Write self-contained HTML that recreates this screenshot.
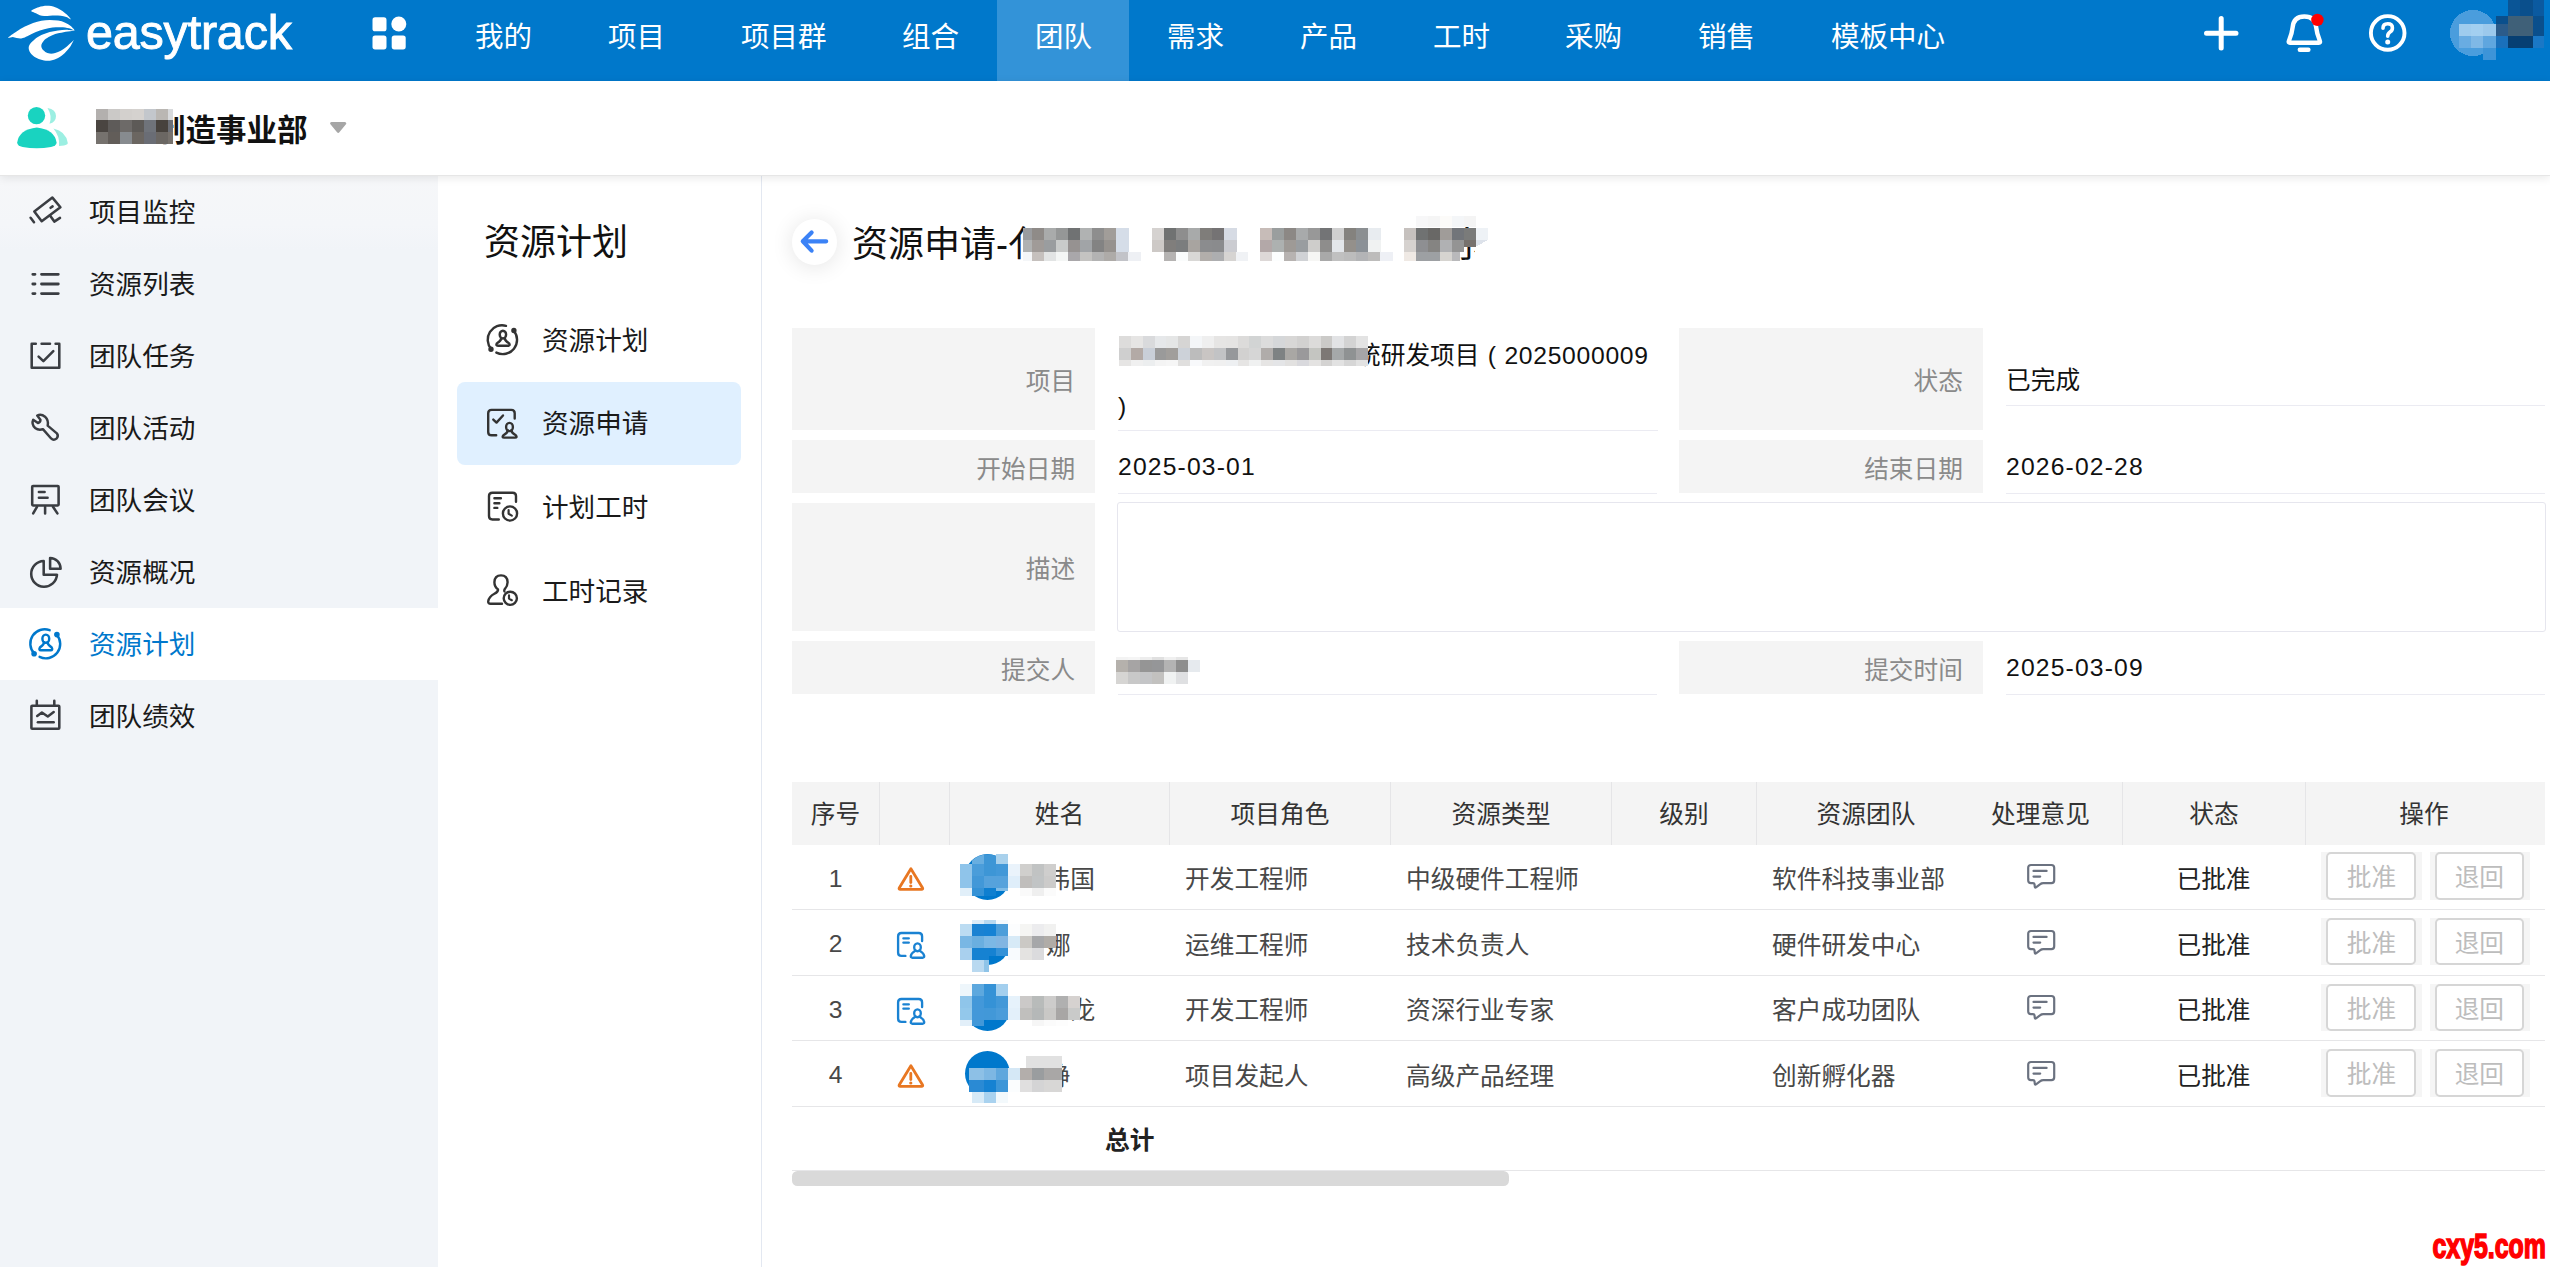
<!DOCTYPE html>
<html lang="zh-CN">
<head>
<meta charset="utf-8">
<title>资源申请 - easytrack</title>
<style>
*{box-sizing:border-box;margin:0;padding:0}
html,body{width:2550px;height:1267px;overflow:hidden;background:#fff}
body{font-family:"Liberation Sans","Noto Sans CJK SC",sans-serif;color:#1a1a1a;position:relative}
.abs{position:absolute}
svg{display:block;overflow:visible}
/* ---------- top nav ---------- */
#nav{position:absolute;left:0;top:0;width:2550px;height:80.8px;background:#0078cb}
#nav .tab{position:absolute;top:1.5px;height:79px;line-height:70px;font-size:28.5px;color:#fff;white-space:nowrap}
#nav .act{position:absolute;left:997px;top:0;width:132px;height:80.8px;background:#3393d8}
#logo-t{position:absolute;left:86px;top:-1px;height:80px;line-height:66px;font-size:48.5px;color:#fff;letter-spacing:-.2px;font-weight:400;-webkit-text-stroke:.9px #fff}
/* ---------- sub header ---------- */
#sub{position:absolute;left:0;top:80.8px;width:2550px;height:95.2px;background:#fff;border-bottom:1.4px solid #e6e6e6;box-shadow:0 2px 9px rgba(0,0,0,.09);z-index:3}
#sub .name{position:absolute;left:155px;top:0;height:95px;line-height:98.5px;font-size:30.5px;font-weight:700;color:#111;white-space:nowrap}
/* ---------- left sidebar ---------- */
#side{position:absolute;left:0;top:175px;width:438px;height:1092px;background:linear-gradient(#f6f7f9 0,#f4f6f9 50px,#f1f4f8 75px)}
#side .it{position:absolute;left:0;width:438px;height:72px}
#side .it.on{background:#fff}
#side .it span{position:absolute;left:89px;top:1px;line-height:72px;font-size:26.6px;color:#1a1a1a;white-space:nowrap}
#side .it.on span{color:#0078cc}
#side .it svg{position:absolute;left:27px;top:18px}
/* ---------- secondary sidebar ---------- */
#sec{position:absolute;left:438px;top:175px;width:323.8px;height:1092px;background:#fff;border-right:1.8px solid #e3e8f1;z-index:2}
#sec h2{position:absolute;left:46px;top:40px;font-size:36px;line-height:56px;font-weight:400;color:#111;white-space:nowrap}
#sec .it{position:absolute;left:19px;width:284px;height:83px;border-radius:8px}
#sec .it.on{background:#e0f0ff}
#sec .it span{position:absolute;left:85px;top:1.4px;line-height:83px;font-size:26.6px;color:#1a1a1a;white-space:nowrap}
#sec .it svg{position:absolute;left:27px;top:24px}
/* ---------- main ---------- */
#main{position:absolute;left:761px;top:175px;width:1789px;height:1092px;background:#fff}
#back{position:absolute;left:30.8px;top:44.2px;width:45.6px;height:45.6px;border-radius:50%;background:#fff;box-shadow:0 2px 22px rgba(0,0,0,.11)}
#title{position:absolute;left:91px;top:41.5px;font-size:36px;line-height:56px;color:#111;white-space:nowrap}
.lab{position:absolute;background:#f4f4f4;color:#8a8a8a;font-size:24.7px;text-align:right;padding-right:20px;white-space:nowrap;display:flex;align-items:center;justify-content:flex-end}
.val{position:absolute;border-bottom:1.6px solid #ebebf2;font-size:24.7px;color:#111;display:flex;align-items:center;white-space:nowrap}
.num{letter-spacing:1.15px}.num2{letter-spacing:.7px}
/* ---------- table ---------- */
#tbl{position:absolute;left:31px;top:607px;width:1753px}
#tbl .hd{position:absolute;left:0;top:0;width:1753px;height:63px;background:#f4f4f4}
#tbl .hd div{position:absolute;top:0;height:63px;line-height:66px;text-align:center;font-size:24.7px;color:#333;border-left:1.5px solid #e5e5e7;white-space:nowrap}
#tbl .row{position:absolute;left:0;width:1753px;height:66px;border-bottom:1.6px solid #e6e6e8}
#tbl .row div.c{position:absolute;top:2.7px;height:64px;line-height:66px;font-size:24.7px;color:#484848;white-space:nowrap}
.btn{position:absolute;top:7.8px;width:90px;height:47.4px;border:2px solid #d6d6d6;border-radius:5px;background:#fff;color:#bdbdbd;font-size:24.7px;line-height:48.5px;text-align:center}
.bb{position:absolute;top:7.8px;width:100.5px;height:47.4px;background:#f5f5f5}
.av{position:absolute;width:45.6px;height:45.6px;border-radius:50%;background:#0078cc}
.mz{position:absolute}
</style>
</head>
<body>
<!-- NAV -->
<div id="nav">
  <div class="act"></div>
  <div id="logo-t">easytrack</div>
  <div class="tab" style="left:475px">我的</div>
  <div class="tab" style="left:608px">项目</div>
  <div class="tab" style="left:741px">项目群</div>
  <div class="tab" style="left:902px">组合</div>
  <div class="tab" style="left:1035px">团队</div>
  <div class="tab" style="left:1167px">需求</div>
  <div class="tab" style="left:1300px">产品</div>
  <div class="tab" style="left:1433px">工时</div>
  <div class="tab" style="left:1565px">采购</div>
  <div class="tab" style="left:1698px">销售</div>
  <div class="tab" style="left:1831px">模板中心</div>
</div>
<!-- SUB -->
<div id="sub">
  <div class="name">制造事业部</div>
</div>
<!-- SIDE -->
<div id="side">
  <div class="it" style="top:1px"><span>项目监控</span></div>
  <div class="it" style="top:73px"><span>资源列表</span></div>
  <div class="it" style="top:145px"><span>团队任务</span></div>
  <div class="it" style="top:217px"><span>团队活动</span></div>
  <div class="it" style="top:289px"><span>团队会议</span></div>
  <div class="it" style="top:361px"><span>资源概况</span></div>
  <div class="it on" style="top:433px"><span>资源计划</span></div>
  <div class="it" style="top:505px"><span>团队绩效</span></div>
</div>
<!-- SEC -->
<div id="sec">
  <h2>资源计划</h2>
  <div class="it" style="top:124px"><span>资源计划</span></div>
  <div class="it on" style="top:207px"><span>资源申请</span></div>
  <div class="it" style="top:291px"><span>计划工时</span></div>
  <div class="it" style="top:375px"><span>工时记录</span></div>
</div>
<!-- MAIN -->
<div id="main">
  <div id="back"></div>
  <div id="title">资源申请-亻<span style="position:absolute;left:596px;top:0;width:27px;height:56px;overflow:hidden">序</span></div>

  <div class="lab" style="left:30.5px;top:153px;width:303.6px;height:102.4px">项目</div>
  <div class="val" style="left:357px;top:153px;width:540px;height:103px;display:block;line-height:51px;padding-top:1.5px"><span style="padding-left:238px;word-spacing:1.5px">统研发项目 ( <span class="num2">2025000009</span></span><br>)</div>
  <div class="lab" style="left:918.3px;top:153px;width:303.6px;height:102.4px">状态</div>
  <div class="val" style="left:1245px;top:153px;width:539px;height:78px;padding-top:23px">已完成</div>

  <div class="lab" style="left:30.5px;top:265px;width:303.6px;height:53.4px">开始日期</div>
  <div class="val num" style="left:357px;top:265px;width:539px;height:54px">2025-03-01</div>
  <div class="lab" style="left:918.3px;top:265px;width:303.6px;height:53.4px">结束日期</div>
  <div class="val num" style="left:1245px;top:265px;width:539px;height:54px">2026-02-28</div>

  <div class="lab" style="left:30.5px;top:328px;width:303.6px;height:128.4px">描述</div>
  <div class="abs" style="left:356px;top:327px;width:1429px;height:130px;border:1.6px solid #e6e6ee;border-radius:3px"></div>

  <div class="lab" style="left:30.5px;top:466px;width:303.6px;height:53.4px">提交人</div>
  <div class="val" style="left:357px;top:466px;width:539px;height:54px"></div>
  <div class="lab" style="left:918.3px;top:466px;width:303.6px;height:53.4px">提交时间</div>
  <div class="val num" style="left:1245px;top:466px;width:539px;height:54px">2025-03-09</div>

  <div id="tbl">
    <div class="hd">
      <div style="left:0;width:87px;border-left:0">序号</div>
      <div style="left:87px;width:70px"></div>
      <div style="left:157px;width:220px">姓名</div>
      <div style="left:377px;width:221px">项目角色</div>
      <div style="left:598px;width:221px">资源类型</div>
      <div style="left:819px;width:145px">级别</div>
      <div style="left:964px;width:219px">资源团队</div>
      <div style="left:1175px;width:147px;border-left:0">处理意见</div>
      <div style="left:1330px;width:183px">状态</div>
      <div style="left:1513px;width:237px">操作</div>
    </div>
<!--ROWS-->
    <div class="row" style="top:62.60px;height:65.6px">
      <div class="c" style="left:0;width:87px;text-align:center;top:1px">1</div>
      <svg style="position:absolute;left:106.1px;top:22.7px" width="30" height="30" viewBox="0 0 30 30"><use href="#i-warn"/></svg>
      <div class="av" style="left:172.8px;top:9.5px"></div>
      <div class="c" style="left:253.6px">伟国</div>
      <div class="c" style="left:393px">开发工程师</div>
      <div class="c" style="left:614px">中级硬件工程师</div>
      <div class="c" style="left:980px">软件科技事业部</div>
      <svg style="position:absolute;left:1236.1px;top:20.5px" width="30" height="30" viewBox="0 0 30 30"><use href="#i-msg"/></svg>
      <div class="c" style="left:1330px;width:183px;text-align:center;color:#222">已批准</div>
      <div class="bb" style="left:1529px"></div><div class="btn" style="left:1534.4px">批准</div>
      <div class="bb" style="left:1637.6px;width:100.3px"></div><div class="btn" style="left:1642.7px;width:89.3px">退回</div>
    </div>
    <div class="row" style="top:128.20px;height:65.6px">
      <div class="c" style="left:0;width:87px;text-align:center;top:1px">2</div>
      <svg style="position:absolute;left:106.0px;top:22.0px" width="30" height="30" viewBox="0 0 30 30"><use href="#i-card"/></svg>
      <div class="av" style="left:172.8px;top:9.5px"></div>
      <div class="c" style="left:254px">娜</div>
      <div class="c" style="left:393px">运维工程师</div>
      <div class="c" style="left:614px">技术负责人</div>
      <div class="c" style="left:980px">硬件研发中心</div>
      <svg style="position:absolute;left:1236.1px;top:20.5px" width="30" height="30" viewBox="0 0 30 30"><use href="#i-msg"/></svg>
      <div class="c" style="left:1330px;width:183px;text-align:center;color:#222">已批准</div>
      <div class="bb" style="left:1529px"></div><div class="btn" style="left:1534.4px">批准</div>
      <div class="bb" style="left:1637.6px;width:100.3px"></div><div class="btn" style="left:1642.7px;width:89.3px">退回</div>
    </div>
    <div class="row" style="top:193.80px;height:65.6px">
      <div class="c" style="left:0;width:87px;text-align:center;top:1px">3</div>
      <svg style="position:absolute;left:106.0px;top:22.0px" width="30" height="30" viewBox="0 0 30 30"><use href="#i-card"/></svg>
      <div class="av" style="left:172.8px;top:9.5px"></div>
      <div class="c" style="left:278.5px">龙</div>
      <div class="c" style="left:393px">开发工程师</div>
      <div class="c" style="left:614px">资深行业专家</div>
      <div class="c" style="left:980px">客户成功团队</div>
      <svg style="position:absolute;left:1236.1px;top:20.5px" width="30" height="30" viewBox="0 0 30 30"><use href="#i-msg"/></svg>
      <div class="c" style="left:1330px;width:183px;text-align:center;color:#222">已批准</div>
      <div class="bb" style="left:1529px"></div><div class="btn" style="left:1534.4px">批准</div>
      <div class="bb" style="left:1637.6px;width:100.3px"></div><div class="btn" style="left:1642.7px;width:89.3px">退回</div>
    </div>
    <div class="row" style="top:259.40px;height:65.6px">
      <div class="c" style="left:0;width:87px;text-align:center;top:1px">4</div>
      <svg style="position:absolute;left:106.1px;top:22.7px" width="30" height="30" viewBox="0 0 30 30"><use href="#i-warn"/></svg>
      <div class="av" style="left:172.8px;top:9.5px"></div>
      <div class="c" style="left:253.5px">静</div>
      <div class="c" style="left:393px">项目发起人</div>
      <div class="c" style="left:614px">高级产品经理</div>
      <div class="c" style="left:980px">创新孵化器</div>
      <svg style="position:absolute;left:1236.1px;top:20.5px" width="30" height="30" viewBox="0 0 30 30"><use href="#i-msg"/></svg>
      <div class="c" style="left:1330px;width:183px;text-align:center;color:#222">已批准</div>
      <div class="bb" style="left:1529px"></div><div class="btn" style="left:1534.4px">批准</div>
      <div class="bb" style="left:1637.6px;width:100.3px"></div><div class="btn" style="left:1642.7px;width:89.3px">退回</div>
    </div>
    <div class="row" style="top:325.00px;height:63.6px">
      <div class="c" style="left:0;width:362.5px;text-align:right;font-weight:700;color:#222;top:1.4px">总计</div>
    </div>
    <div class="abs" style="left:0;top:389.4px;width:717px;height:14.6px;border-radius:5.5px;background:#d9d9d9"></div>
<!--/ROWS-->
  </div>
</div>
<svg id="icons" class="abs" style="left:0;top:0;z-index:10;pointer-events:none" width="2550" height="1267" viewBox="0 0 2550 1267" fill="none" stroke-linecap="round" stroke-linejoin="round">
  <defs>
    <g id="i-warn" fill="none" stroke-linecap="round" stroke-linejoin="round" stroke="#e87722" stroke-width="2.8"><path d="M12.9 1.7 L1.2 21 Q0.6 22.4 2.2 22.4 L23.6 22.4 Q25.2 22.4 24.6 21 Z"/><path d="M12.8 9.4 V15.6"/><circle cx="12.8" cy="19" r="0.9" fill="#e87722" stroke-width="1.4"/></g>
    <g id="i-card" fill="none" stroke-linecap="round" stroke-linejoin="round" stroke="#1a82d2" stroke-width="2.35"><path d="M24.1 9 V4.4 Q24.1 1 20.7 1 H3.5 Q0.1 1 0.1 4.4 V20.5 Q0.1 23.9 3.5 23.9 H7.4"/><path d="M5.4 6.3 H10.8 M5.4 10.6 H10.8"/><ellipse cx="19.5" cy="15.3" rx="3.3" ry="3.9"/><path d="M17.6 18.6 Q13.4 21 12.8 24 Q12.7 25.7 14.4 25.7 H24.6 Q26.3 25.7 26.2 24 Q25.6 21 21.4 18.6"/></g>
    <g id="i-msg" fill="none" stroke-linecap="round" stroke-linejoin="round" stroke="#6b7280" stroke-width="2.2"><path d="M3 0 H23.4 Q26.2 0 26.2 2.8 V15.3 Q26.2 18.1 23.4 18.1 H15.4 Q13.4 18.1 12.3 19.1 L8 22.4 Q7 23 6.8 21.8 L6.5 19.2 Q6.3 18.1 5 18.1 H3 Q0.2 18.1 0.2 15.3 V2.8 Q0.2 0 3 0 Z"/><path d="M5.5 5.9 H18.6 M5.5 11.6 H12.2"/></g>
  </defs>
  <!-- logo swoosh -->
  <g fill="#fff" stroke="none">
    <path d="M31.2 10.8 C31.7 9.8 36.0 8.0 38.7 7.2 C41.3 6.4 44.2 5.8 47.0 5.8 C49.7 5.8 52.7 6.3 55.2 7.2 C57.8 8.1 60.3 9.6 62.4 11.0 C64.5 12.5 66.6 14.3 68.0 15.7 C69.4 17.1 71.1 19.2 70.8 19.4 C70.6 19.7 68.0 17.7 66.3 17.1 C64.6 16.5 62.6 16.0 60.8 15.7 C58.9 15.5 57.1 15.4 55.2 15.4 C53.4 15.4 51.6 15.6 49.7 15.7 C47.9 15.9 45.9 16.2 44.2 16.1 C42.5 16.0 41.2 15.7 39.8 15.2 C38.4 14.7 37.3 14.0 35.9 13.3 C34.5 12.5 30.8 11.8 31.2 10.8 Z"/>
    <path d="M8.3 37.6 C8.9 36.6 13.8 33.3 16.6 31.5 C19.3 29.7 22.1 27.9 24.9 26.5 C27.6 25.1 30.4 23.9 33.1 22.9 C35.9 22.0 38.7 21.2 41.4 20.7 C44.2 20.2 47.0 19.9 49.7 19.9 C52.5 19.9 55.4 20.1 58.0 20.6 C60.6 21.0 63.1 21.7 65.2 22.7 C67.3 23.6 69.2 24.7 70.7 26.0 C72.3 27.3 74.8 30.1 74.5 30.5 C74.2 30.9 71.3 28.8 69.1 28.3 C66.8 27.7 63.5 27.3 60.8 27.2 C58.0 27.1 55.2 27.3 52.5 27.6 C49.7 28.0 47.0 28.5 44.2 29.3 C41.4 30.0 38.5 31.0 35.9 32.0 C33.3 33.1 30.8 34.4 28.7 35.4 C26.7 36.3 25.1 37.3 23.8 37.8 C22.4 38.4 21.6 38.5 20.4 38.5 C19.2 38.5 17.9 38.2 16.6 38.0 C15.3 37.7 14.1 37.2 12.7 37.1 C11.3 37.1 7.6 38.5 8.3 37.6 Z"/>
    <path d="M74.3 30.7 C73.4 30.5 69.0 29.9 66.3 29.8 C63.6 29.8 60.8 30.0 58.0 30.4 C55.2 30.8 52.5 31.3 49.7 32.0 C47.0 32.8 43.9 33.9 41.4 35.1 C39.0 36.3 36.6 37.8 34.8 39.2 C33.0 40.7 31.4 42.3 30.4 43.6 C29.4 45.0 28.8 46.1 28.7 47.5 C28.6 48.9 29.1 50.6 29.8 51.9 C30.6 53.3 31.7 54.6 33.1 55.8 C34.6 57.0 36.6 58.3 38.7 59.1 C40.8 59.9 43.5 60.6 45.9 60.8 C48.3 60.9 50.7 60.6 53.0 59.9 C55.3 59.3 57.6 58.2 59.7 56.9 C61.8 55.6 63.9 53.8 65.7 51.9 C67.6 50.1 69.4 47.9 70.7 45.9 C72.1 43.8 73.7 40.1 73.9 39.5 C74.1 38.9 73.1 40.9 71.8 42.1 C70.6 43.3 68.1 45.5 66.3 47.0 C64.5 48.4 62.6 49.8 60.8 50.8 C58.9 51.8 57.1 52.6 55.2 53.0 C53.4 53.5 51.4 53.8 49.7 53.6 C48.1 53.4 46.6 52.8 45.3 51.9 C44.0 51.1 42.6 49.8 42.0 48.6 C41.3 47.4 41.2 46.0 41.4 44.8 C41.7 43.5 42.4 42.2 43.6 40.9 C44.8 39.6 46.7 38.3 48.6 37.1 C50.6 36.0 52.8 34.9 55.2 34.1 C57.7 33.3 60.8 32.7 63.5 32.2 C66.3 31.6 70.0 31.3 71.8 31.0 C73.6 30.8 75.2 30.9 74.3 30.7 Z"/>
  </g>
  <!-- app grid -->
  <g fill="#fff" stroke="none">
    <rect x="372.5" y="17.3" width="14" height="14" rx="2.6"/>
    <circle cx="398.8" cy="24" r="7.5"/>
    <rect x="372.5" y="35.4" width="14" height="14" rx="2.6"/>
    <rect x="391.7" y="35.4" width="14" height="14" rx="2.6"/>
  </g>
  <!-- plus -->
  <path d="M2206.5 33.2 H2236 M2221.2 18.5 V48" stroke="#fff" stroke-width="5"/>
  <!-- bell -->
  <g stroke="#fff" stroke-width="4.4">
    <path d="M2288.9 41 Q2292 33.5 2292.6 27.5 Q2293.6 16.5 2304.4 16.5 Q2315.2 16.5 2316.2 27.5 Q2316.8 33.5 2319.9 41 Q2320.6 42.7 2318.8 42.7 H2290 Q2288.2 42.7 2288.9 41 Z"/>
    <path d="M2299.8 49.7 H2308.4"/>
  </g>
  <circle cx="2317.4" cy="19.9" r="6.2" fill="#ff0000"/>
  <!-- help -->
  <circle cx="2387.7" cy="32.9" r="16.8" stroke="#fff" stroke-width="3.9"/>
  <path d="M2383 28.3 Q2383 23.8 2387.7 23.8 Q2392.4 23.8 2392.4 27.9 Q2392.4 30.4 2390 32 Q2387.7 33.6 2387.7 36.2" stroke="#fff" stroke-width="3.6"/>
  <circle cx="2387.7" cy="42.1" r="2.5" fill="#fff"/>
  <!-- team icon -->
  <g stroke="none">
    <path d="M47.5 108 Q56 109.5 56 116 Q56 122 49.5 123.8 Q52.5 116 47.5 108 Z" fill="#9cefe2"/>
    <path d="M53.4 128.4 Q66 131 67.8 143 Q67.6 145 64 145.4 L59 146 Q60 136 53.4 128.4 Z" fill="#9cefe2"/>
    <circle cx="36.5" cy="115.6" r="8.7" fill="#19d3c0"/>
    <path d="M17.2 142.6 Q19 129.6 36.8 127.6 Q54.6 129.6 56.6 142.6 Q56.6 146 51 147 Q36.8 149.4 22.6 147 Q17.2 146 17.2 142.6 Z" fill="#19d3c0"/>
  </g>
  <!-- caret -->
  <path d="M331.6 123.4 H344.8 L338.2 131.4 Z" fill="#a6a6a6" stroke="#a6a6a6" stroke-width="3"/>

  <!-- ===== left sidebar icons ===== -->
  <g stroke="#3a3d42" stroke-width="2.55">
    <!-- monitor cam -->
    <path d="M52.4 197.6 L60.4 207.3 L41.7 221.2 L34.3 211.5 Z"/>
    <path d="M50.6 207.8 L52.6 206.4"/>
    <path d="M50 215.4 L54.3 221.6 L60 217.9"/>
    <path d="M30.6 217.8 L34 222.2"/>
    <!-- list -->
    <path d="M32.8 274.3 H35 M41.5 274.3 H58.3 M32.8 284 H35 M41.5 284 H58.3 M32.8 293.6 H35 M41.5 293.6 H58.3" stroke-width="2.8"/>
    <!-- task -->
    <path d="M35.8 343.8 H31.7 V367.8 H59.3 V343.8 H55.6 M41.6 343.8 H50"/>
    <path d="M38.6 356.6 L43.4 361.2 L53.3 351.2"/>
    <!-- wrench -->
    <g transform="translate(45.3 427.5) scale(.955) translate(-45.3 -427.5)"><path d="M32.6 419.4 Q30.6 424 34.6 428 Q38.4 430.8 42.8 429.2 L51.4 439 Q54 441.6 57 439.2 Q59.6 436.6 57.4 433.6 L47.8 425.6 Q49 420 45 416.2 Q41 413 36.8 415 L40.2 419.4 Q40.4 422 37.6 422.8 Z"/></g>
    <!-- meeting -->
    <rect x="32.2" y="485.9" width="26.4" height="19.5" rx="0.8"/>
    <path d="M38.9 491.9 H44.6 M38.9 497.7 H47.6"/>
    <path d="M37 506.8 L33.2 513.4 M45.1 506.8 V513.4 M53 506.8 L57.4 513.4"/>
    <!-- pie -->
    <path d="M43.7 561 A12.9 12.9 0 1 0 57 574.7 H43.7 Z"/>
    <path d="M50.1 568.7 V557.9 A10.8 10.8 0 0 1 60.6 568.7 Z"/>
    <!-- perf -->
    <rect x="31.4" y="705.8" width="27.9" height="22.9" rx="0.8"/>
    <path d="M36.8 700.8 V705.8 M54.3 700.8 V705.8"/>
    <path d="M37.2 716 L41.9 712.5 L47.8 716.5 L53.7 712.1"/>
    <path d="M37.9 722.3 H53.7"/>
  </g>
  <!-- resource plan (active blue) -->
  <g stroke="#0078cc" stroke-width="2.45">
    <path d="M49.6 630.2 A14.3 14.3 0 0 0 34.2 653.4"/>
    <path d="M56.8 634.8 A14.3 14.3 0 0 1 39.6 656.9"/>
    <circle cx="56.9" cy="634.6" r="1.6" fill="#0078cc"/>
    <circle cx="34.1" cy="653.7" r="1.6" fill="#0078cc"/>
    <ellipse cx="45.8" cy="638.7" rx="3.4" ry="4.1"/>
    <path d="M44.2 642.2 Q43.8 645.2 40 647.4 Q38.4 650.2 41 650.2 H50.6 Q53.2 650.2 51.6 647.4 Q47.8 645.2 47.4 642.2"/>
  </g>

  <!-- ===== secondary sidebar icons ===== -->
  <g stroke="#333" stroke-width="2.4">
    <!-- resource plan -->
    <path d="M506 325.8 A14.3 14.3 0 0 0 491.2 348.9"/>
    <path d="M513.8 330.7 A14.3 14.3 0 0 1 496.4 352.6"/>
    <circle cx="513.9" cy="330.5" r="1.5" fill="#333"/>
    <circle cx="491" cy="349.2" r="1.5" fill="#333"/>
    <ellipse cx="502.9" cy="334.6" rx="3.2" ry="3.9"/>
    <path d="M501.4 338 Q501 341 497 343.2 Q495.4 345.8 498 345.8 H508 Q510.6 345.8 509 343.2 Q505 341 504.6 338"/>
    <!-- resource apply -->
    <path d="M514.7 418.6 V413.3 Q514.7 409.9 511.3 409.9 H491.6 Q488.2 409.9 488.2 413.3 V431.9 Q488.2 435.3 491.6 435.3 H496.2"/>
    <path d="M493.3 419.6 L496.5 422.6 L503 415.5"/>
    <ellipse cx="509.5" cy="427" rx="3.4" ry="4.1"/>
    <path d="M507.9 430.5 Q507.4 433.2 503.4 435.2 Q501.6 437.6 504.2 437.6 H515 Q517.6 437.6 515.8 435.2 Q511.8 433.2 511.3 430.5"/>
    <!-- plan hours -->
    <path d="M516 501.8 V496.1 Q516 492.7 512.6 492.7 H492.4 Q489 492.7 489 496.1 V516.1 Q489 519.5 492.4 519.5 H498.8"/>
    <path d="M494.4 498.2 H500.9 M494.4 503.2 H499.4 M494.4 507.9 H497.3"/>
    <circle cx="510" cy="513.5" r="7.1"/>
    <path d="M508.6 510.2 V513.8 L511.8 515.6" stroke-width="2.2"/>
    <!-- hours record -->
    <path d="M502 603.8 H490.6 Q488 603.8 488.2 601.4 Q489 596.6 494.4 593.8 Q498.4 591.8 498 589.4 Q494.4 586.6 494.4 582.2 Q494.6 575.4 501 575.4 Q507.4 575.4 507.6 582.2 Q507.6 586 504.6 589.4 Q504 590.4 504.4 591.4"/>
    <circle cx="510.3" cy="598.3" r="6.6"/>
    <path d="M509 595.4 V598.6 L511.8 600.2" stroke-width="2.2"/>
  </g>

  <!-- back arrow -->
  <path d="M802.8 241.3 H826.2 M811.6 232.6 L802.8 241.3 L811.6 250.6" stroke="#3b82f6" stroke-width="4.2"/>
<!--MOSAIC-->
  <g id="mosaic" stroke="none" shape-rendering="crispEdges">
  <rect x="96.1" y="108.8" width="12.2" height="11.5" fill="#b3b0ae"/>
  <rect x="108.0" y="108.8" width="12.3" height="11.5" fill="#cbc9c7"/>
  <rect x="120.0" y="108.8" width="12.2" height="11.5" fill="#d3d0cd"/>
  <rect x="131.9" y="108.8" width="12.5" height="11.5" fill="#d5d2cf"/>
  <rect x="144.1" y="108.8" width="12.4" height="11.5" fill="#c3c7cc"/>
  <rect x="156.2" y="108.8" width="12.5" height="11.5" fill="#bab7b3"/>
  <rect x="168.4" y="108.8" width="4.8" height="11.5" fill="#d8dadc"/>
  <rect x="96.1" y="120.0" width="12.2" height="12.3" fill="#4a4541"/>
  <rect x="108.0" y="120.0" width="12.3" height="12.3" fill="#5e5b59"/>
  <rect x="120.0" y="120.0" width="12.2" height="12.3" fill="#6d6a68"/>
  <rect x="131.9" y="120.0" width="12.5" height="12.3" fill="#5d5a57"/>
  <rect x="144.1" y="120.0" width="12.4" height="12.3" fill="#6f737a"/>
  <rect x="156.2" y="120.0" width="12.5" height="12.3" fill="#47423d"/>
  <rect x="168.4" y="120.0" width="4.8" height="12.3" fill="#6b6e75"/>
  <rect x="96.1" y="132.0" width="12.2" height="12.2" fill="#76726e"/>
  <rect x="108.0" y="132.0" width="12.3" height="12.2" fill="#625d59"/>
  <rect x="120.0" y="132.0" width="12.2" height="12.2" fill="#878b8f"/>
  <rect x="131.9" y="132.0" width="12.5" height="12.2" fill="#6b6661"/>
  <rect x="144.1" y="132.0" width="12.4" height="12.2" fill="#6a6d75"/>
  <rect x="156.2" y="132.0" width="12.5" height="12.2" fill="#6b6763"/>
  <rect x="168.4" y="132.0" width="4.8" height="12.2" fill="#77726d"/>
  <rect x="1023.1" y="228.1" width="9.6" height="12.1" fill="#9a9c9f"/>
  <rect x="1032.4" y="228.1" width="12.0" height="12.1" fill="#8f8b88"/>
  <rect x="1044.1" y="228.1" width="12.5" height="12.1" fill="#a9abab"/>
  <rect x="1056.3" y="228.1" width="12.2" height="12.1" fill="#959797"/>
  <rect x="1068.2" y="228.1" width="12.5" height="12.1" fill="#707273"/>
  <rect x="1080.4" y="228.1" width="12.1" height="12.1" fill="#b0b2b2"/>
  <rect x="1092.2" y="228.1" width="12.0" height="12.1" fill="#8e8e8e"/>
  <rect x="1103.9" y="228.1" width="12.5" height="12.1" fill="#a19d99"/>
  <rect x="1116.1" y="228.1" width="12.6" height="12.1" fill="#d5dde8"/>
  <rect x="1023.1" y="239.9" width="9.6" height="12.4" fill="#b0b2b2"/>
  <rect x="1032.4" y="239.9" width="12.0" height="12.4" fill="#a09b98"/>
  <rect x="1044.1" y="239.9" width="12.5" height="12.4" fill="#9a9d9f"/>
  <rect x="1056.3" y="239.9" width="12.2" height="12.4" fill="#c9cbca"/>
  <rect x="1068.2" y="239.9" width="12.5" height="12.4" fill="#969291"/>
  <rect x="1080.4" y="239.9" width="12.1" height="12.4" fill="#a1a4a7"/>
  <rect x="1092.2" y="239.9" width="12.0" height="12.4" fill="#838383"/>
  <rect x="1103.9" y="239.9" width="12.5" height="12.4" fill="#96928e"/>
  <rect x="1116.1" y="239.9" width="12.6" height="12.4" fill="#d5dde8"/>
  <rect x="1023.1" y="252.0" width="9.6" height="9.2" fill="#f4f6f8"/>
  <rect x="1032.4" y="252.0" width="12.0" height="9.2" fill="#c5c0bd"/>
  <rect x="1044.1" y="252.0" width="12.5" height="9.2" fill="#e2e4e4"/>
  <rect x="1056.3" y="252.0" width="12.2" height="9.2" fill="#f4f6f5"/>
  <rect x="1068.2" y="252.0" width="12.5" height="9.2" fill="#a9a7aa"/>
  <rect x="1080.4" y="252.0" width="12.1" height="9.2" fill="#c4c3c1"/>
  <rect x="1092.2" y="252.0" width="12.0" height="9.2" fill="#b3b3b3"/>
  <rect x="1103.9" y="252.0" width="12.5" height="9.2" fill="#aeaba8"/>
  <rect x="1116.1" y="252.0" width="12.6" height="9.2" fill="#c2c3c8"/>
  <rect x="1128.4" y="252.0" width="12.1" height="9.2" fill="#eef0f4"/>
  <rect x="1152.0" y="228.1" width="12.6" height="12.1" fill="#d5d2d0"/>
  <rect x="1164.3" y="228.1" width="12.1" height="12.1" fill="#707272"/>
  <rect x="1176.1" y="228.1" width="12.0" height="12.1" fill="#8e8e8e"/>
  <rect x="1187.8" y="228.1" width="12.5" height="12.1" fill="#a8aaaa"/>
  <rect x="1200.0" y="228.1" width="12.5" height="12.1" fill="#7f7d7a"/>
  <rect x="1212.2" y="228.1" width="12.2" height="12.1" fill="#757374"/>
  <rect x="1224.1" y="228.1" width="12.5" height="12.1" fill="#d6dbe4"/>
  <rect x="1152.0" y="239.9" width="12.6" height="12.4" fill="#cdc9c6"/>
  <rect x="1164.3" y="239.9" width="12.1" height="12.4" fill="#807e7c"/>
  <rect x="1176.1" y="239.9" width="12.0" height="12.4" fill="#7b7d7e"/>
  <rect x="1187.8" y="239.9" width="12.5" height="12.4" fill="#a8a4a0"/>
  <rect x="1200.0" y="239.9" width="12.5" height="12.4" fill="#8b8c8e"/>
  <rect x="1212.2" y="239.9" width="12.2" height="12.4" fill="#8a8b8d"/>
  <rect x="1224.1" y="239.9" width="12.5" height="12.4" fill="#cbccd1"/>
  <rect x="1164.3" y="252.0" width="12.1" height="9.2" fill="#b5b3b2"/>
  <rect x="1176.1" y="252.0" width="12.0" height="9.2" fill="#fafcfc"/>
  <rect x="1187.8" y="252.0" width="12.5" height="9.2" fill="#d9d8d6"/>
  <rect x="1200.0" y="252.0" width="12.5" height="9.2" fill="#b2aeab"/>
  <rect x="1212.2" y="252.0" width="12.2" height="9.2" fill="#adaeb0"/>
  <rect x="1224.1" y="252.0" width="12.5" height="9.2" fill="#d6d4d2"/>
  <rect x="1236.3" y="252.0" width="12.0" height="9.2" fill="#f0f2f5"/>
  <rect x="1259.8" y="228.1" width="12.5" height="12.1" fill="#c7bcb8"/>
  <rect x="1272.0" y="228.1" width="12.2" height="12.1" fill="#9a9e9e"/>
  <rect x="1283.9" y="228.1" width="12.5" height="12.1" fill="#8c8885"/>
  <rect x="1296.1" y="228.1" width="12.0" height="12.1" fill="#a8aaab"/>
  <rect x="1307.8" y="228.1" width="12.5" height="12.1" fill="#989898"/>
  <rect x="1320.0" y="228.1" width="12.3" height="12.1" fill="#737476"/>
  <rect x="1332.0" y="228.1" width="12.4" height="12.1" fill="#d0d0d0"/>
  <rect x="1344.1" y="228.1" width="12.1" height="12.1" fill="#84827e"/>
  <rect x="1355.9" y="228.1" width="12.4" height="12.1" fill="#8b8f92"/>
  <rect x="1368.0" y="228.1" width="12.7" height="12.1" fill="#e8ecf0"/>
  <rect x="1259.8" y="239.9" width="12.5" height="12.4" fill="#b3a8a8"/>
  <rect x="1272.0" y="239.9" width="12.2" height="12.4" fill="#adb1b0"/>
  <rect x="1283.9" y="239.9" width="12.5" height="12.4" fill="#9e9a96"/>
  <rect x="1296.1" y="239.9" width="12.0" height="12.4" fill="#999da0"/>
  <rect x="1307.8" y="239.9" width="12.5" height="12.4" fill="#cecdcb"/>
  <rect x="1320.0" y="239.9" width="12.3" height="12.4" fill="#8e8d8c"/>
  <rect x="1332.0" y="239.9" width="12.4" height="12.4" fill="#e3e6ea"/>
  <rect x="1344.1" y="239.9" width="12.1" height="12.4" fill="#94908b"/>
  <rect x="1355.9" y="239.9" width="12.4" height="12.4" fill="#8b9197"/>
  <rect x="1368.0" y="239.9" width="12.7" height="12.4" fill="#f0f2f2"/>
  <rect x="1259.8" y="252.0" width="12.5" height="9.2" fill="#ddd8d7"/>
  <rect x="1272.0" y="252.0" width="12.2" height="9.2" fill="#fcfefe"/>
  <rect x="1283.9" y="252.0" width="12.5" height="9.2" fill="#b7b3b1"/>
  <rect x="1296.1" y="252.0" width="12.0" height="9.2" fill="#d0d2d5"/>
  <rect x="1307.8" y="252.0" width="12.5" height="9.2" fill="#f6f6f4"/>
  <rect x="1320.0" y="252.0" width="12.3" height="9.2" fill="#a9a9a9"/>
  <rect x="1332.0" y="252.0" width="12.4" height="9.2" fill="#c0c0c0"/>
  <rect x="1344.1" y="252.0" width="12.1" height="9.2" fill="#bcbcbc"/>
  <rect x="1355.9" y="252.0" width="12.4" height="9.2" fill="#b3b4b6"/>
  <rect x="1368.0" y="252.0" width="12.7" height="9.2" fill="#bdbcbb"/>
  <rect x="1380.4" y="252.0" width="12.1" height="9.2" fill="#eef0f5"/>
  <rect x="1404.0" y="228.1" width="12.3" height="12.1" fill="#c6c1be"/>
  <rect x="1416.0" y="228.1" width="12.3" height="12.1" fill="#707272"/>
  <rect x="1428.0" y="228.1" width="12.2" height="12.1" fill="#696866"/>
  <rect x="1439.9" y="228.1" width="12.3" height="12.1" fill="#a09c99"/>
  <rect x="1451.9" y="228.1" width="12.4" height="12.1" fill="#72757a"/>
  <rect x="1464.0" y="228.1" width="12.2" height="12.1" fill="#7a7b7a"/>
  <rect x="1475.9" y="228.1" width="12.3" height="12.1" fill="#eef2f6"/>
  <rect x="1404.0" y="239.9" width="12.3" height="12.4" fill="#d6d2cf"/>
  <rect x="1416.0" y="239.9" width="12.3" height="12.4" fill="#8e8f92"/>
  <rect x="1428.0" y="239.9" width="12.2" height="12.4" fill="#858482"/>
  <rect x="1439.9" y="239.9" width="12.3" height="12.4" fill="#b0b1b3"/>
  <rect x="1404.0" y="252.0" width="12.3" height="9.2" fill="#efe9e4"/>
  <rect x="1416.0" y="252.0" width="12.3" height="9.2" fill="#9da0a3"/>
  <rect x="1428.0" y="252.0" width="12.2" height="9.2" fill="#9da0a3"/>
  <rect x="1439.9" y="252.0" width="12.3" height="9.2" fill="#d6d4d0"/>
  <rect x="1451.9" y="239.9" width="12.3" height="12.4" fill="#949494"/>
  <rect x="1464" y="239.9" width="12.1" height="6.6" fill="#77716d"/>
  <rect x="1451.9" y="252" width="8.2" height="8.9" fill="#b9b9bb"/>
  <path d="M1475.9 240 H1487.9 L1476 246.6 Z" fill="#dde2ea"/>
  <rect x="1416.0" y="216.1" width="12.3" height="11.2" fill="#f7f7f8"/>
  <rect x="1428.0" y="216.1" width="12.2" height="11.2" fill="#f5f5f5"/>
  <rect x="1439.9" y="216.1" width="12.3" height="11.2" fill="#fcfbf9"/>
  <rect x="1451.9" y="216.1" width="12.4" height="11.2" fill="#f4f6f8"/>
  <rect x="1464.0" y="216.1" width="12.2" height="11.2" fill="#f4f4f4"/>
  <rect x="1118.9" y="335.9" width="12.2" height="12.1" fill="#dddcdb"/>
  <rect x="1130.8" y="335.9" width="12.2" height="12.1" fill="#e6e5e4"/>
  <rect x="1142.6" y="335.9" width="12.2" height="12.1" fill="#d9dadc"/>
  <rect x="1154.5" y="335.9" width="12.2" height="12.1" fill="#e6e8ea"/>
  <rect x="1166.3" y="335.9" width="12.2" height="12.1" fill="#e5e6e6"/>
  <rect x="1178.2" y="335.9" width="12.2" height="12.1" fill="#d6d5d4"/>
  <rect x="1190.0" y="335.9" width="12.2" height="12.1" fill="#f4f6f8"/>
  <rect x="1201.9" y="335.9" width="12.2" height="12.1" fill="#efefef"/>
  <rect x="1213.8" y="335.9" width="12.2" height="12.1" fill="#e6e5e4"/>
  <rect x="1225.6" y="335.9" width="12.2" height="12.1" fill="#e5e4e3"/>
  <rect x="1237.5" y="335.9" width="12.2" height="12.1" fill="#dcdbda"/>
  <rect x="1249.3" y="335.9" width="12.2" height="12.1" fill="#d2d4d4"/>
  <rect x="1261.2" y="335.9" width="12.2" height="12.1" fill="#dcdcdc"/>
  <rect x="1273.0" y="335.9" width="12.2" height="12.1" fill="#d5d7d9"/>
  <rect x="1284.9" y="335.9" width="12.2" height="12.1" fill="#d8d7d6"/>
  <rect x="1296.8" y="335.9" width="12.2" height="12.1" fill="#d2d1d0"/>
  <rect x="1308.6" y="335.9" width="12.2" height="12.1" fill="#dcdbda"/>
  <rect x="1320.5" y="335.9" width="12.2" height="12.1" fill="#cbcac8"/>
  <rect x="1332.3" y="335.9" width="12.2" height="12.1" fill="#e2e3e5"/>
  <rect x="1344.2" y="335.9" width="12.2" height="12.1" fill="#d3d3d3"/>
  <rect x="1356.0" y="335.9" width="12.2" height="12.1" fill="#e3e3e3"/>
  <rect x="1118.9" y="347.7" width="12.2" height="12.4" fill="#cfcfcf"/>
  <rect x="1130.8" y="347.7" width="12.2" height="12.4" fill="#b3aaa6"/>
  <rect x="1142.6" y="347.7" width="12.2" height="12.4" fill="#c9cfd8"/>
  <rect x="1154.5" y="347.7" width="12.2" height="12.4" fill="#9a9a9a"/>
  <rect x="1166.3" y="347.7" width="12.2" height="12.4" fill="#a19e9b"/>
  <rect x="1178.2" y="347.7" width="12.2" height="12.4" fill="#cdd2d9"/>
  <rect x="1190.0" y="347.7" width="12.2" height="12.4" fill="#bcbcbc"/>
  <rect x="1201.9" y="347.7" width="12.2" height="12.4" fill="#c9c5c3"/>
  <rect x="1213.8" y="347.7" width="12.2" height="12.4" fill="#c2c3c5"/>
  <rect x="1225.6" y="347.7" width="12.2" height="12.4" fill="#96989b"/>
  <rect x="1237.5" y="347.7" width="12.2" height="12.4" fill="#d2d1d0"/>
  <rect x="1249.3" y="347.7" width="12.2" height="12.4" fill="#d6d6d6"/>
  <rect x="1261.2" y="347.7" width="12.2" height="12.4" fill="#b0acaa"/>
  <rect x="1273.0" y="347.7" width="12.2" height="12.4" fill="#7e8283"/>
  <rect x="1284.9" y="347.7" width="12.2" height="12.4" fill="#a9a7a4"/>
  <rect x="1296.8" y="347.7" width="12.2" height="12.4" fill="#9a999b"/>
  <rect x="1308.6" y="347.7" width="12.2" height="12.4" fill="#c4c5c1"/>
  <rect x="1320.5" y="347.7" width="12.2" height="12.4" fill="#7d7875"/>
  <rect x="1332.3" y="347.7" width="12.2" height="12.4" fill="#a5a8a9"/>
  <rect x="1344.2" y="347.7" width="12.2" height="12.4" fill="#8f9293"/>
  <rect x="1356.0" y="347.7" width="12.2" height="12.4" fill="#a6a5a7"/>
  <rect x="1118.9" y="359.8" width="12.2" height="6.5" fill="#e6e5e4"/>
  <rect x="1130.8" y="359.8" width="12.2" height="6.5" fill="#f0f0f0"/>
  <rect x="1142.6" y="359.8" width="12.2" height="6.5" fill="#eceeef"/>
  <rect x="1154.5" y="359.8" width="12.2" height="6.5" fill="#f4f4f4"/>
  <rect x="1166.3" y="359.8" width="12.2" height="6.5" fill="#f6f6f6"/>
  <rect x="1178.2" y="359.8" width="12.2" height="6.5" fill="#e0dfde"/>
  <rect x="1190.0" y="359.8" width="12.2" height="6.5" fill="#f8f9fb"/>
  <rect x="1201.9" y="359.8" width="12.2" height="6.5" fill="#f1f1f1"/>
  <rect x="1213.8" y="359.8" width="12.2" height="6.5" fill="#f0f0f0"/>
  <rect x="1225.6" y="359.8" width="12.2" height="6.5" fill="#eef0f2"/>
  <rect x="1237.5" y="359.8" width="12.2" height="6.5" fill="#e6e5e4"/>
  <rect x="1249.3" y="359.8" width="12.2" height="6.5" fill="#f0f1f1"/>
  <rect x="1261.2" y="359.8" width="12.2" height="6.5" fill="#e6e5e4"/>
  <rect x="1273.0" y="359.8" width="12.2" height="6.5" fill="#e4e5e7"/>
  <rect x="1284.9" y="359.8" width="12.2" height="6.5" fill="#e2e1e0"/>
  <rect x="1296.8" y="359.8" width="12.2" height="6.5" fill="#d9d9dd"/>
  <rect x="1308.6" y="359.8" width="12.2" height="6.5" fill="#e4e3e2"/>
  <rect x="1320.5" y="359.8" width="12.2" height="6.5" fill="#d4d3d2"/>
  <rect x="1332.3" y="359.8" width="12.2" height="6.5" fill="#e2e2e2"/>
  <rect x="1344.2" y="359.8" width="12.2" height="6.5" fill="#d6d6d6"/>
  <rect x="1356.0" y="359.8" width="12.2" height="6.5" fill="#e2e2e2"/>
  <rect x="1116.0" y="657.1" width="12.3" height="3.2" fill="#f3f3f3"/>
  <rect x="1128.0" y="657.1" width="12.3" height="3.2" fill="#f5f5f5"/>
  <rect x="1140.0" y="657.1" width="12.3" height="3.2" fill="#ededed"/>
  <rect x="1152.0" y="657.1" width="12.3" height="3.2" fill="#e0e0e0"/>
  <rect x="1164.0" y="657.1" width="12.3" height="3.2" fill="#f0f0f0"/>
  <rect x="1176.0" y="657.1" width="12.3" height="3.2" fill="#e6e6e6"/>
  <rect x="1116.0" y="660.0" width="12.3" height="12.2" fill="#b5b1ac"/>
  <rect x="1128.0" y="660.0" width="12.3" height="12.2" fill="#a6a4a4"/>
  <rect x="1140.0" y="660.0" width="12.3" height="12.2" fill="#959595"/>
  <rect x="1152.0" y="660.0" width="12.3" height="12.2" fill="#959698"/>
  <rect x="1164.0" y="660.0" width="12.3" height="12.2" fill="#b3b3b3"/>
  <rect x="1176.0" y="660.0" width="12.3" height="12.2" fill="#8e8e8e"/>
  <rect x="1188.0" y="660.0" width="12.2" height="12.2" fill="#e6eaee"/>
  <rect x="1116.0" y="671.9" width="12.3" height="12.3" fill="#d6d5d3"/>
  <rect x="1128.0" y="671.9" width="12.3" height="12.3" fill="#c8c8c8"/>
  <rect x="1140.0" y="671.9" width="12.3" height="12.3" fill="#c4c5c7"/>
  <rect x="1152.0" y="671.9" width="12.3" height="12.3" fill="#c2c1bf"/>
  <rect x="1164.0" y="671.9" width="12.3" height="12.3" fill="#f0f2f2"/>
  <rect x="1176.0" y="671.9" width="12.3" height="12.3" fill="#dfe0e2"/>
  <clipPath id="cpa1"><circle cx="987.6" cy="877" r="22.8"/></clipPath>
  <rect x="972.1" y="853" width="12" height="11.2" fill="#68aee0" clip-path="url(#cpa1)"/>
  <rect x="983.9" y="853" width="12.2" height="11.2" fill="#3d96d6" clip-path="url(#cpa1)"/>
  <rect x="995.9" y="854.0" width="12.2" height="10.3" fill="#a9d1ec"/>
  <rect x="960.1" y="864.0" width="12.3" height="12.3" fill="#8fc4ea"/>
  <rect x="972.1" y="864.0" width="12.1" height="12.3" fill="#4a9dda"/>
  <rect x="983.9" y="864.0" width="12.3" height="12.3" fill="#3d96d6"/>
  <rect x="995.9" y="864.0" width="12.2" height="12.3" fill="#4298d8"/>
  <rect x="1007.8" y="864.0" width="12.4" height="12.3" fill="#eaf3fb"/>
  <rect x="1019.9" y="864.0" width="12.4" height="12.3" fill="#d0cfcd"/>
  <rect x="1032.0" y="864.0" width="12.3" height="12.3" fill="#c1c3c3"/>
  <rect x="1044.0" y="864.0" width="12.1" height="12.3" fill="#cfcecd"/>
  <rect x="960.1" y="876.0" width="12.3" height="12.1" fill="#8fc4ea"/>
  <rect x="972.1" y="876.0" width="12.1" height="12.1" fill="#4298d8"/>
  <rect x="983.9" y="876.0" width="12.3" height="12.1" fill="#56a2dc"/>
  <rect x="995.9" y="876.0" width="12.2" height="12.1" fill="#56a2dc"/>
  <rect x="1007.8" y="876.0" width="12.4" height="12.1" fill="#dfeefa"/>
  <rect x="1019.9" y="876.0" width="12.4" height="12.1" fill="#c0bebc"/>
  <rect x="1032.0" y="876.0" width="12.3" height="12.1" fill="#c1c4c5"/>
  <rect x="1044.0" y="876.0" width="12.1" height="12.1" fill="#cccbca"/>
  <rect x="960.1" y="887.8" width="12.3" height="8.3" fill="#e1eff9"/>
  <rect x="972.1" y="887.8" width="12.1" height="8.3" fill="#3592d6"/>
  <rect x="983.9" y="887.8" width="12.3" height="8.3" fill="#0f7fd0"/>
  <rect x="1019.9" y="887.8" width="12.4" height="8.3" fill="#fafafa"/>
  <rect x="1032.0" y="887.8" width="12.3" height="8.3" fill="#efefef"/>
  <rect x="1044.0" y="887.8" width="12.1" height="8.3" fill="#fbfbfb"/>
  <rect x="995.9" y="887.8" width="12.2" height="2.8" fill="#7fbbe6"/>
  <rect x="972.1" y="920.0" width="12.1" height="4.3" fill="#dcecf8"/>
  <rect x="983.9" y="920.0" width="12.3" height="4.3" fill="#b7d8f0"/>
  <rect x="995.9" y="920.0" width="12.2" height="4.3" fill="#f4f9fd"/>
  <rect x="960.1" y="924.0" width="12.3" height="12.2" fill="#bcdcf2"/>
  <rect x="972.1" y="924.0" width="12.1" height="12.2" fill="#1a82d2"/>
  <rect x="983.9" y="924.0" width="12.3" height="12.2" fill="#1682d4"/>
  <rect x="995.9" y="924.0" width="12.2" height="12.2" fill="#4d9eda"/>
  <rect x="1007.8" y="924.0" width="12.4" height="12.2" fill="#fcfdfe"/>
  <rect x="1019.9" y="924.0" width="12.4" height="12.2" fill="#f5f5f3"/>
  <rect x="1032.0" y="924.0" width="12.3" height="12.2" fill="#ececee"/>
  <rect x="1044.0" y="924.0" width="12.1" height="12.2" fill="#f1f1f0"/>
  <rect x="960.1" y="935.9" width="12.3" height="12.4" fill="#79b7e4"/>
  <rect x="972.1" y="935.9" width="12.1" height="12.4" fill="#6aafe0"/>
  <rect x="983.9" y="935.9" width="12.3" height="12.4" fill="#7cb8e5"/>
  <rect x="995.9" y="935.9" width="12.2" height="12.4" fill="#81b5e2"/>
  <rect x="1007.8" y="935.9" width="12.4" height="12.4" fill="#d7eaf7"/>
  <rect x="1019.9" y="935.9" width="12.4" height="12.4" fill="#cbc9c5"/>
  <rect x="1032.0" y="935.9" width="12.3" height="12.4" fill="#a6a7a9"/>
  <rect x="1044.0" y="935.9" width="12.1" height="12.4" fill="#b0aca7"/>
  <rect x="960.1" y="948.0" width="12.3" height="12.1" fill="#a9d0ee"/>
  <rect x="972.1" y="948.0" width="12.1" height="12.1" fill="#1682d2"/>
  <rect x="1007.8" y="948.0" width="12.4" height="12.1" fill="#f8fbfe"/>
  <rect x="1019.9" y="948.0" width="12.4" height="12.1" fill="#e4e3e1"/>
  <rect x="1032.0" y="948.0" width="12.3" height="12.1" fill="#dbdbdd"/>
  <rect x="972.1" y="959.8" width="12.1" height="12.3" fill="#b9d9f0"/>
  <rect x="983.9" y="948" width="5.3" height="12" fill="#1682d2"/>
  <rect x="989" y="948" width="7" height="8" fill="#1682d2"/>
  <rect x="995.9" y="948" width="12.2" height="8" fill="#3592d8"/>
  <rect x="983.9" y="959.8" width="5.2" height="12" fill="#8fc4e8"/>
  <rect x="960.1" y="984.0" width="12.3" height="12.4" fill="#eef6fb"/>
  <rect x="972.1" y="984.0" width="12.1" height="12.4" fill="#5da8de"/>
  <rect x="983.9" y="984.0" width="12.3" height="12.4" fill="#3592d6"/>
  <rect x="995.9" y="984.0" width="12.2" height="12.4" fill="#a3cfee"/>
  <rect x="960.1" y="996.1" width="12.3" height="12.2" fill="#8fc5ea"/>
  <rect x="972.1" y="996.1" width="12.1" height="12.2" fill="#4398d9"/>
  <rect x="983.9" y="996.1" width="12.3" height="12.2" fill="#3592d6"/>
  <rect x="995.9" y="996.1" width="12.2" height="12.2" fill="#4298d8"/>
  <rect x="1007.8" y="996.1" width="12.4" height="12.2" fill="#e6f2fb"/>
  <rect x="1019.9" y="996.1" width="12.4" height="12.2" fill="#cbc9c8"/>
  <rect x="1032.0" y="996.1" width="12.3" height="12.2" fill="#b8bbba"/>
  <rect x="1044.0" y="996.1" width="12.1" height="12.2" fill="#cdcccb"/>
  <rect x="1055.8" y="996.1" width="12.2" height="12.2" fill="#b0b0b0"/>
  <rect x="1067.7" y="996.1" width="12.3" height="12.2" fill="#d6d2d0"/>
  <rect x="960.1" y="1008.0" width="12.3" height="12.0" fill="#93c8eb"/>
  <rect x="972.1" y="1008.0" width="12.1" height="12.0" fill="#4398d9"/>
  <rect x="983.9" y="1008.0" width="12.3" height="12.0" fill="#4298d8"/>
  <rect x="995.9" y="1008.0" width="12.2" height="12.0" fill="#4a9cda"/>
  <rect x="1007.8" y="1008.0" width="12.4" height="12.0" fill="#e3f0fa"/>
  <rect x="1019.9" y="1008.0" width="12.4" height="12.0" fill="#c0bfbd"/>
  <rect x="1032.0" y="1008.0" width="12.3" height="12.0" fill="#b5b8b8"/>
  <rect x="1044.0" y="1008.0" width="12.1" height="12.0" fill="#c9c8c6"/>
  <rect x="1055.8" y="1008.0" width="12.2" height="12.0" fill="#a8a6a5"/>
  <rect x="1067.7" y="1008.0" width="12.3" height="12.0" fill="#c9cac9"/>
  <rect x="960.1" y="1019.7" width="12.3" height="6.2" fill="#e2eff9"/>
  <rect x="972.1" y="1019.7" width="12.1" height="6.2" fill="#4298d8"/>
  <rect x="1032.0" y="1019.7" width="12.3" height="6.2" fill="#f6f6f6"/>
  <rect x="1044.0" y="1019.7" width="12.1" height="6.2" fill="#fbfbfb"/>
  <rect x="1055.8" y="1019.7" width="12.2" height="6.2" fill="#fdfdfd"/>
  <rect x="1026" y="1056" width="36" height="12" fill="#e1e1e1"/>
  <rect x="969.0" y="1067.9" width="15.2" height="12.3" fill="#8dc0e6"/>
  <rect x="983.9" y="1067.9" width="12.3" height="12.3" fill="#7db7e3"/>
  <rect x="995.9" y="1067.9" width="12.2" height="12.3" fill="#5fa7dd"/>
  <rect x="1007.8" y="1067.9" width="12.4" height="12.3" fill="#d5e8f6"/>
  <rect x="1019.9" y="1067.9" width="12.4" height="12.3" fill="#b3aeab"/>
  <rect x="1032.0" y="1067.9" width="12.3" height="12.3" fill="#9a9d9f"/>
  <rect x="1044.0" y="1067.9" width="18.3" height="12.3" fill="#a9a7a6"/>
  <rect x="969.0" y="1079.9" width="15.2" height="12.0" fill="#2a8ad4"/>
  <rect x="983.9" y="1079.9" width="12.3" height="12.0" fill="#1682d2"/>
  <rect x="995.9" y="1079.9" width="12.2" height="12.0" fill="#3d96d8"/>
  <rect x="1007.8" y="1079.9" width="12.4" height="12.0" fill="#fbfdfe"/>
  <rect x="1019.9" y="1079.9" width="12.4" height="12.0" fill="#e0dfdf"/>
  <rect x="1032.0" y="1079.9" width="12.3" height="12.0" fill="#d4d4d5"/>
  <rect x="1044.0" y="1079.9" width="18.3" height="12.0" fill="#d8d7d6"/>
  <rect x="972.1" y="1091.6" width="12.1" height="11.5" fill="#d7eaf7"/>
  <rect x="983.9" y="1091.6" width="12.3" height="11.5" fill="#a9d2ef"/>
  <rect x="995.9" y="1091.6" width="12.2" height="11.5" fill="#f3f9fc"/>
  <circle cx="2473" cy="33" r="23" fill="#4a9ddd"/>
  <rect x="2508.0" y="0.0" width="12.3" height="16.3" fill="#0a5596"/>
  <rect x="2520.0" y="0.0" width="12.8" height="16.3" fill="#0a4f8c"/>
  <rect x="2532.5" y="0.0" width="11.8" height="16.3" fill="#0b5aa0"/>
  <rect x="2496.0" y="16.0" width="12.3" height="8.3" fill="#0a4f8c"/>
  <rect x="2508.0" y="16.0" width="12.3" height="8.3" fill="#3f6078"/>
  <rect x="2520.0" y="16.0" width="12.8" height="8.3" fill="#3f6078"/>
  <rect x="2532.5" y="16.0" width="11.8" height="8.3" fill="#0a4f8c"/>
  <rect x="2459.0" y="24.0" width="12.3" height="12.3" fill="#9fccee"/>
  <rect x="2471.0" y="24.0" width="12.3" height="12.3" fill="#a3cff0"/>
  <rect x="2483.0" y="24.0" width="13.3" height="12.3" fill="#9cc9ec"/>
  <rect x="2496.0" y="24.0" width="12.3" height="12.3" fill="#2b5b8a"/>
  <rect x="2508.0" y="24.0" width="12.3" height="12.3" fill="#3f6078"/>
  <rect x="2520.0" y="24.0" width="12.8" height="12.3" fill="#3f6078"/>
  <rect x="2532.5" y="24.0" width="11.8" height="12.3" fill="#0a4f8c"/>
  <rect x="2459.0" y="36.0" width="12.3" height="12.3" fill="#69ace2"/>
  <rect x="2471.0" y="36.0" width="12.3" height="12.3" fill="#7fb8e6"/>
  <rect x="2483.0" y="36.0" width="13.3" height="12.3" fill="#5fa6df"/>
  <rect x="2496.0" y="36.0" width="12.3" height="12.3" fill="#1a70bb"/>
  <rect x="2508.0" y="36.0" width="12.3" height="12.3" fill="#063f72"/>
  <rect x="2520.0" y="36.0" width="12.8" height="12.3" fill="#063f72"/>
  <rect x="2532.5" y="36.0" width="11.8" height="12.3" fill="#1a78c6"/>
  <rect x="2483.0" y="48.0" width="13.3" height="12.3" fill="#3d94d8"/>
  </g>
<!--/MOSAIC-->
</svg>
<div id="wm" class="abs" style="right:4px;top:1223.4px;font-size:35.5px;font-weight:700;color:#ff0000;line-height:46px;transform:scaleX(.70);transform-origin:right center;-webkit-text-stroke:1.7px #ff0000;white-space:nowrap">cxy5.com</div>
</body>
</html>
